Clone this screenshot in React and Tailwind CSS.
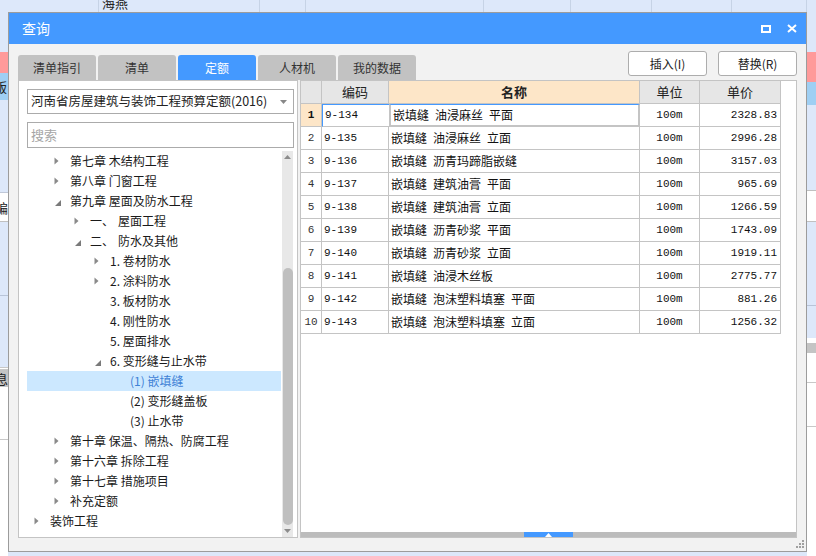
import React from "react"

const CJK = "font-['Noto_Sans_CJK_SC',sans-serif]"
const MONO = "font-['Liberation_Mono','Noto_Sans_CJK_SC',monospace]"

const TABS = ["清单指引", "清单", "定额", "人材机", "我的数据"]

const TREE = [
  { lvl: 1, icon: "closed", text: "第七章 木结构工程" },
  { lvl: 1, icon: "closed", text: "第八章 门窗工程" },
  { lvl: 1, icon: "open", text: "第九章 屋面及防水工程" },
  { lvl: 2, icon: "closed", text: "一、", rest: "屋面工程" },
  { lvl: 2, icon: "open", text: "二、", rest: "防水及其他" },
  { lvl: 3, icon: "closed", text: "1. 卷材防水" },
  { lvl: 3, icon: "closed", text: "2. 涂料防水" },
  { lvl: 3, text: "3. 板材防水" },
  { lvl: 3, text: "4. 刚性防水" },
  { lvl: 3, text: "5. 屋面排水" },
  { lvl: 3, icon: "open", text: "6. 变形缝与止水带" },
  { lvl: 4, text: "(1) 嵌填缝", selected: true },
  { lvl: 4, text: "(2) 变形缝盖板" },
  { lvl: 4, text: "(3) 止水带" },
  { lvl: 1, icon: "closed", text: "第十章 保温、隔热、防腐工程" },
  { lvl: 1, icon: "closed", text: "第十六章 拆除工程" },
  { lvl: 1, icon: "closed", text: "第十七章 措施项目" },
  { lvl: 1, icon: "closed", text: "补充定额" },
  { lvl: 0, icon: "closed", text: "装饰工程" },
]

const PAD = ["pl-[7px]", "pl-[27px]", "pl-[47px]", "pl-[67px]", "pl-[87px]"]

const ROWS = [
  ["9-134", "嵌填缝 油浸麻丝 平面", "2328.83"],
  ["9-135", "嵌填缝 油浸麻丝 立面", "2996.28"],
  ["9-136", "嵌填缝 沥青玛蹄脂嵌缝", "3157.03"],
  ["9-137", "嵌填缝 建筑油膏 平面", "965.69"],
  ["9-138", "嵌填缝 建筑油膏 立面", "1266.59"],
  ["9-139", "嵌填缝 沥青砂浆 平面", "1743.09"],
  ["9-140", "嵌填缝 沥青砂浆 立面", "1919.11"],
  ["9-141", "嵌填缝 油浸木丝板", "2775.77"],
  ["9-142", "嵌填缝 泡沫塑料填塞 平面", "881.26"],
  ["9-143", "嵌填缝 泡沫塑料填塞 立面", "1256.32"],
]

const TOP_CELLS = ["w-[91px]", "w-[161px]", "w-[46px]", "w-[178px]", "w-[87px]", "w-[81px]", "w-[80px]", "w-[75px]"]

function Tri({ open }) {
  if (open) {
    return (
      <svg width="6" height="6" className="ml-[1px] mt-[3px]">
        <path d="M6 0 L6 6 L0 6 Z" fill="#7a7a7a" />
      </svg>
    )
  }
  return (
    <svg width="5" height="8">
      <path d="M0.5 0.5 L4.5 4 L0.5 7.5 Z" fill="#8a8a8a" />
    </svg>
  )
}

function Background() {
  return (
    <div className={`flex h-full ${CJK} text-[13px] text-[#222]`}>
      {/* left edge of the app behind */}
      <div className="w-[8px] flex flex-col overflow-hidden">
        <div className="h-[52px] shrink-0" />
        <div className="h-[21px] shrink-0 bg-[#ff9a9a]" />
        <div className="h-[27px] shrink-0 bg-[#9fcff3] flex items-center overflow-hidden">
          <span className="-ml-[6px] leading-none">版</span>
        </div>
        <div className="h-[93px] shrink-0 border-b border-[#c0c8d8]" />
        <div className="h-[29px] shrink-0 bg-white border-b border-[#c0c0c0] flex items-center overflow-hidden">
          <span className="-ml-[5px] leading-none">编</span>
        </div>
        <div className="h-[74px] shrink-0 border-b border-[#b8c4d8]" />
        <div className="h-[71px] shrink-0" />
        <div className="h-[3px] shrink-0 bg-white border-y border-[#c8c8c8]" />
        <div className="h-[17px] shrink-0 bg-[#c4c4c4] flex items-center overflow-hidden">
          <span className="-ml-[5px] leading-none">息</span>
        </div>
        <div className="h-[53px] shrink-0 bg-white border-b border-[#c8c8c8]" />
        <div className="flex-1 bg-white" />
      </div>

      <div className="flex-1 flex flex-col">
        <div className="h-[12px] flex overflow-hidden">
          {TOP_CELLS.map((w, i) => (
            <div key={i} className={`${w} h-full border-r border-[#c6d3e6] overflow-hidden`}>
              {i === 1 && <span className="block -mt-[5px] ml-[3px] leading-[16px]">海燕</span>}
            </div>
          ))}
        </div>
      </div>

      {/* right edge of the app behind */}
      <div className="w-[9px] flex flex-col overflow-hidden">
        <div className="h-[52px] shrink-0" />
        <div className="h-[30px] shrink-0 bg-[#ff9a9a]" />
        <div className="h-[23px] shrink-0 bg-[#9fcff3]" />
        <div className="h-[85px] shrink-0" />
        <div className="h-[32px] shrink-0 bg-white border-y border-[#c0c0c0]" />
        <div className="h-[84px] shrink-0 border-b border-[#b8c4d8]" />
        <div className="h-[32px] shrink-0" />
        <div className="h-[5px] shrink-0 bg-white" />
        <div className="h-[10px] shrink-0 bg-[#c4c4c4]" />
        <div className="h-[30px] shrink-0 bg-white border-b border-[#c8c8c8]" />
        <div className="h-[44px] shrink-0 bg-white border-b border-[#c8c8c8]" />
        <div className="flex-1 bg-white" />
      </div>
    </div>
  )
}

function TreePanel() {
  return (
    <div className="w-[280px] shrink-0 bg-white border border-[#c4c4c4] flex flex-col pt-[8px] pl-[8px] pr-[3px]">
      <div className="h-[25px] border border-[#ababab] flex items-center pl-[3px] pr-[6px] text-[12.5px] text-[#222]">
        <span>河南省房屋建筑与装饰工程预算定额(2016)</span>
        <svg width="7" height="4" className="ml-auto">
          <path d="M0 0 L7 0 L3.5 4 Z" fill="#888" />
        </svg>
      </div>
      <div className="mt-[8px] h-[26px] border border-[#ababab] flex items-center pl-[3px] text-[13px] text-[#a6a6a6]">
        搜索
      </div>
      <div className="mt-[3px] flex-1 flex gap-[1px] overflow-hidden">
        <div className="w-[254px] flex flex-col text-[12px] text-[#1a1a1a]">
          {TREE.map((n, i) => (
            <div
              key={i}
              className={`h-[20px] shrink-0 flex items-center ${PAD[n.lvl]} ${n.selected ? "bg-[#cce8ff] text-[#3f82d6]" : ""}`}
            >
              <div className="w-[16px] flex items-center">
                {n.icon && <Tri open={n.icon === "open"} />}
              </div>
              <span className="whitespace-pre">{n.text}</span>
              {n.rest && <span className="ml-[4px]">{n.rest}</span>}
            </div>
          ))}
        </div>
        <div className="w-[11px] bg-[#e8e8e8] flex flex-col items-center">
          <div className="h-[12px] shrink-0 flex items-center">
            <svg width="7" height="4">
              <path d="M3.5 0 L7 4 L0 4 Z" fill="#8c8c8c" />
            </svg>
          </div>
          <div className="h-[105px] shrink-0" />
          <div className="h-[257px] w-[10px] shrink-0 rounded-full bg-[#bfbfbf]" />
          <div className="flex-1 flex items-center">
            <svg width="7" height="4">
              <path d="M0 0 L7 0 L3.5 4 Z" fill="#8c8c8c" />
            </svg>
          </div>
        </div>
      </div>
    </div>
  )
}

function DataGrid() {
  const cell = "h-full border-r border-b border-[#c4c4c4] flex items-center"
  return (
    <div className="w-[480px] flex flex-col">
      <div className="h-[23px] flex text-[13px] text-[#222]">
        <div className={`${cell} w-[21px] bg-[#e6e6e6]`} />
        <div className={`${cell} w-[67px] bg-[#e6e6e6] justify-center`}>编码</div>
        <div className={`${cell} w-[251px] bg-[#fde6c8] justify-center font-bold`}>名称</div>
        <div className={`${cell} w-[60px] bg-[#e6e6e6] justify-center`}>单位</div>
        <div className={`${cell} w-[81px] bg-[#e6e6e6] justify-center`}>单价</div>
      </div>
      {ROWS.map((r, i) => {
        const first = i === 0
        return (
          <div key={i} className="h-[23px] flex text-[12px] text-[#111]">
            <div
              className={`${cell} w-[21px] justify-center ${MONO} text-[11px] ${first ? "bg-[#fde6c8] font-bold" : "text-[#333]"}`}
            >
              {i + 1}
            </div>
            <div
              className={`${cell} w-[67px] pl-[2px] ${MONO} text-[11px] ${first ? "border-l border-l-[#4499ff] border-t border-t-[#4499ff] border-r-0" : ""}`}
            >
              {r[0]}
            </div>
            <div
              className={`${cell} w-[251px] pl-[2px] whitespace-pre ${first ? "border-l-2 border-r-2 border-b-2 border-[#7b7b7b] border-t border-t-[#4499ff]" : ""}`}
            >
              {r[1].replace(/ /g, "\u2002")}
            </div>
            <div className={`${cell} w-[60px] justify-center ${MONO} text-[11px]`}>100m</div>
            <div className={`${cell} w-[81px] justify-end pr-[3px] ${MONO} text-[11px]`}>{r[2]}</div>
          </div>
        )
      })}
    </div>
  )
}

function Dialog() {
  return (
    <div className={`absolute left-[8px] top-[12px] w-[799px] h-[540px] flex flex-col border border-[#9c9c9c] bg-[#f2f2f2] ${CJK}`}>
      <div className="h-[31px] shrink-0 bg-[#4499ff] flex items-center pl-[13px] pr-[9px]">
        <span className="text-white text-[14px]">查询</span>
        <div className="ml-auto flex items-center gap-[16px]">
          <svg width="10" height="8">
            <rect x="1" y="1" width="8" height="6" fill="none" stroke="#fff" strokeWidth="2" />
          </svg>
          <svg width="10" height="9">
            <path d="M1 1 L9 8 M9 1 L1 8" stroke="#fff" strokeWidth="2" />
          </svg>
        </div>
      </div>

      <div className="flex-1 flex flex-col px-[9px] pt-[7px] pb-[13px] relative">
        <div className="h-[29px] shrink-0 flex">
          <div className="flex items-end gap-[2px]">
            {TABS.map(t => (
              <div
                key={t}
                className={`w-[78px] h-[25px] rounded-t-[3px] flex items-center justify-center text-[12px] ${t === "定额" ? "bg-[#4499ff] text-white" : "bg-[#c2c2c2] text-[#333]"}`}
              >
                {t}
              </div>
            ))}
          </div>
          <div className="ml-auto flex items-start gap-[11px]">
            <button className="w-[79px] h-[25px] bg-white border border-[#adadad] rounded-[3px] text-[12px] text-[#222]">插入(I)</button>
            <button className="w-[79px] h-[25px] bg-white border border-[#adadad] rounded-[3px] text-[12px] text-[#222]">替换(R)</button>
          </div>
        </div>

        <div className="flex-1 flex gap-[2px] min-h-0">
          <TreePanel />
          <div className="flex-1 bg-white border border-[#c4c4c4] flex flex-col">
            <DataGrid />
            <div className="flex-1" />
            <div className="h-[5px] shrink-0 flex bg-[#bcbcbc]">
              <div className="w-[223px]" />
              <div className="w-[49px] bg-[#4499ff] flex items-center justify-center">
                <svg width="7" height="4">
                  <path d="M3.5 0 L7 4 L0 4 Z" fill="#fff" />
                </svg>
              </div>
            </div>
          </div>
        </div>

        {/* resize grip */}
        <svg width="8" height="8" className="absolute right-[2px] bottom-[3px]">
          <rect x="6" y="0" width="2" height="2" fill="#a0a0a0" />
          <rect x="3" y="3" width="2" height="2" fill="#a0a0a0" />
          <rect x="6" y="3" width="2" height="2" fill="#a0a0a0" />
          <rect x="0" y="6" width="2" height="2" fill="#a0a0a0" />
          <rect x="3" y="6" width="2" height="2" fill="#a0a0a0" />
          <rect x="6" y="6" width="2" height="2" fill="#a0a0a0" />
        </svg>
      </div>
    </div>
  )
}

export default function App() {
  return (
    <div className="relative w-[816px] h-[556px] overflow-hidden bg-[#dde8fa]">
      <Background />
      <Dialog />
    </div>
  )
}
